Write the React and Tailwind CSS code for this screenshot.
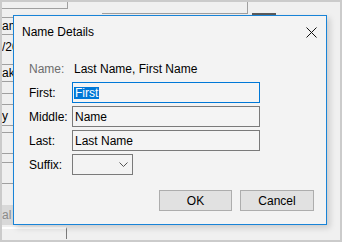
import React from "react";

const font = { fontFamily: '"Liberation Sans", Arial, sans-serif' };

function Field({ label, children, muted }) {
  return (
    <div className="flex items-center h-[21px]">
      <div className={`w-[43px] shrink-0 ${muted ? "text-[#6d6d6d]" : "text-black"}`}>{label}</div>
      {children}
    </div>
  );
}

function TextBox({ value, focused, selected }) {
  return (
    <div
      className={`w-[188px] h-[21px] flex items-center px-[1px] bg-[#f4f4f4] border ${
        focused ? "border-[#0078d7]" : "border-[#7a7a7a]"
      }`}
    >
      <span className={selected ? "bg-[#0078d7] text-white px-[1px] leading-[12px]" : "px-[1px]"}>{value}</span>
    </div>
  );
}

export default function App() {
  return (
    <div
      className="relative w-[342px] h-[242px] overflow-hidden bg-[#f0f0f0] border-2 border-[#cbcbcb] text-[12px]"
      style={font}
    >
      {/* Background window, mostly hidden behind the dialog */}
      <div className="absolute left-0 top-0 w-[66px] h-[7px] border-b border-r border-[#a0a0a0]" />
      <div className="absolute left-[100px] top-0 w-[146px] h-[12px] border-b border-r border-[#a0a0a0]" />
      <div className="absolute left-[250px] top-[11px] w-[24px] h-[3px] bg-[#5a5a5a]" />

      <div className="absolute left-0 top-[15px] w-[40px] h-[18px] border-y border-[#a0a0a0] leading-[16px] text-black">
        am
      </div>
      <div className="absolute left-0 top-[37px] w-[40px] h-[18px] leading-[16px] text-black">/20</div>
      <div className="absolute left-0 top-[62px] w-[40px] h-[18px] border-y border-[#a0a0a0] leading-[16px] text-black">
        ak
      </div>
      <div className="absolute left-0 top-[91px] w-[40px] h-[12px] border-y border-[#a0a0a0]" />
      <div className="absolute left-0 top-[106px] w-[40px] h-[18px] border-b border-[#a0a0a0] leading-[16px] text-black">
        y
      </div>
      <div className="absolute left-0 top-[130px] w-[40px] h-[22px] border-y border-[#a0a0a0]" />
      <div className="absolute left-0 top-[160px] w-[40px] h-[22px] border-y border-[#a0a0a0]" />
      <div className="absolute left-0 top-[203px] w-[40px] h-[20px] bg-[#d9d9d9] leading-[20px] text-[#8a8a8a]">al</div>
      <div className="absolute left-0 top-[225px] w-[65px] h-[12px] border-t-2 border-r border-t-white border-r-[#7a7a7a]" />

      {/* Dialog */}
      <div className="absolute left-[11px] top-[13px] w-[314px] h-[210px] bg-[#f3f3f3] border border-[#1883d7] shadow-[3px_3px_6px_rgba(0,0,0,0.15)] flex flex-col">
        <div className="h-[30px] mt-[1px] flex items-center justify-between pl-[8px] pr-[9px]">
          <span className="text-black">Name Details</span>
          <svg width="11" height="11" viewBox="0 0 11 11" fill="none">
            <path d="M0.5 0.5L10.5 10.5M10.5 0.5L0.5 10.5" stroke="#111" strokeWidth="1" />
          </svg>
        </div>

        <div className="mt-[11px] pl-[15px] flex flex-col gap-[3px]">
          <Field label="Name:" muted>
            <span className="pl-[2px]">Last Name, First Name</span>
          </Field>
          <Field label="First:">
            <TextBox value="First" focused selected />
          </Field>
          <Field label="Middle:">
            <TextBox value="Name" />
          </Field>
          <Field label="Last:">
            <TextBox value="Last Name" />
          </Field>
          <Field label="Suffix:">
            <div className="w-[61px] h-[21px] border border-[#7a7a7a] flex items-center justify-end pr-[4px]">
              <svg width="9" height="5" viewBox="0 0 9 5" fill="none">
                <path d="M0.5 0.5L4.5 4.5L8.5 0.5" stroke="#555" strokeWidth="1" />
              </svg>
            </div>
          </Field>
        </div>

        <div className="mt-[15px] flex justify-end gap-[8px] pr-[12px]">
          <button className="w-[73px] h-[21px] bg-[#e1e1e1] border border-[#adadad] text-black">OK</button>
          <button className="w-[74px] h-[21px] bg-[#e1e1e1] border border-[#adadad] text-black">Cancel</button>
        </div>
      </div>
    </div>
  );
}
